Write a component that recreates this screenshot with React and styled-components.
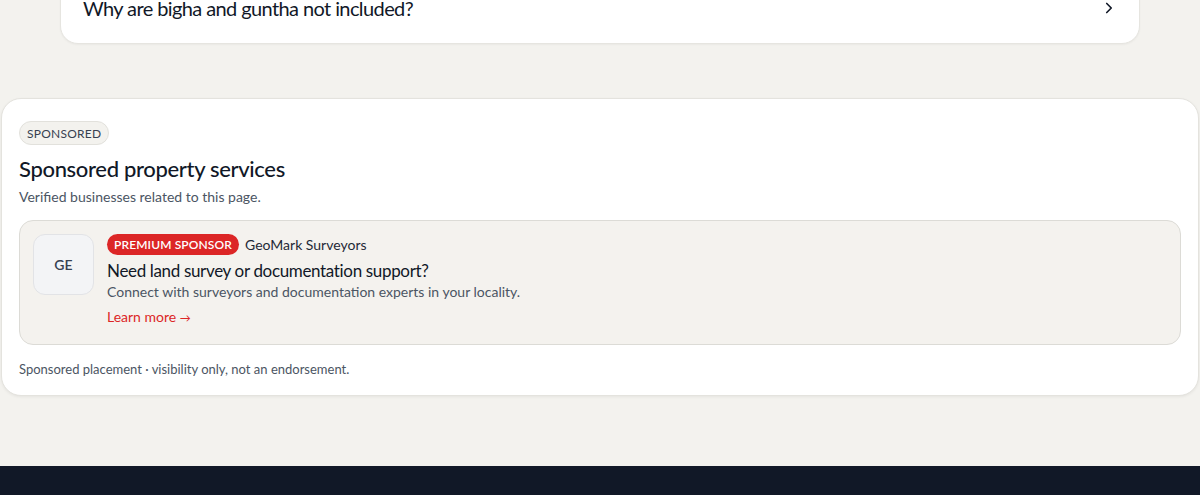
import React from 'react'
import styled, { createGlobalStyle } from 'styled-components'

const GlobalStyle = createGlobalStyle`
  html, body {
    margin: 0;
    padding: 0;
    background: #f3f2ee;
    font-family: Lato, "Noto Sans", sans-serif;
    color: #111827;
    -webkit-font-smoothing: antialiased;
  }
  * { box-sizing: border-box; }
`

const Page = styled.div`
  display: flex;
  flex-direction: column;
  min-height: 495px;
  overflow: hidden;
`

const FaqSection = styled.section`
  padding: 0 60px;
  margin-top: -26px;
`

const FaqCard = styled.div`
  background: #fff;
  border: 1px solid #e6e5e0;
  border-radius: 18px;
  padding: 19px 22px 21px;
  box-shadow: 0 1px 2px rgba(0, 0, 0, 0.04);
`

const FaqRow = styled.div`
  display: flex;
  align-items: center;
  justify-content: space-between;
`

const Question = styled.span`
  font-size: 20px;
  line-height: 28px;
  letter-spacing: -0.03em;
  color: #111827;
`

const Chevron = styled.svg`
  width: 18px;
  height: 18px;
  margin-right: -1px;
  color: #111827;
`

const SponsorCard = styled.section`
  margin: 54px 1px 0;
  background: #fff;
  border: 1px solid #e4e3de;
  border-radius: 20px;
  padding: 22px 17px 17px;
  box-shadow: 0 1px 3px rgba(0, 0, 0, 0.06);
`

const Tag = styled.span`
  display: inline-flex;
  align-items: center;
  height: 24px;
  padding: 0 7px;
  border-radius: 999px;
  background: #f3f2ee;
  border: 1px solid #e2e1dc;
  font-size: 12px;
  letter-spacing: 0.02em;
  color: #374151;
`

const Title = styled.h2`
  margin: 10px 0 0;
  font-size: 22px;
  line-height: 28px;
  font-weight: 500;
  letter-spacing: -0.015em;
  color: #111827;
`

const Subtitle = styled.p`
  margin: 4px 0 0;
  font-size: 14px;
  line-height: 20px;
  color: #4b5563;
`

const AdCard = styled.div`
  margin-top: 13px;
  display: flex;
  gap: 13px;
  padding: 13px 13px 16px;
  background: #f4f2ee;
  border: 1px solid #dcdbd6;
  border-radius: 14px;
`

const Logo = styled.div`
  flex: none;
  width: 61px;
  height: 61px;
  display: flex;
  align-items: center;
  justify-content: center;
  background: #f3f4f6;
  border: 1px solid #e2e3e6;
  border-radius: 12px;
  font-size: 14px;
  font-weight: 600;
  color: #374151;
`

const AdBody = styled.div`
  display: flex;
  flex-direction: column;
`

const AdMeta = styled.div`
  display: flex;
  align-items: center;
  gap: 6px;
  height: 21px;
`

const Premium = styled.span`
  display: inline-flex;
  align-items: center;
  height: 21px;
  padding: 0 7px;
  border-radius: 999px;
  background: #dc2626;
  color: #fff;
  font-size: 12px;
  font-weight: 600;
  letter-spacing: 0.01em;
`

const Company = styled.span`
  font-size: 14px;
  color: #1f2937;
`

const AdHeading = styled.h3`
  margin: 4px 0 0;
  font-size: 17px;
  line-height: 24px;
  font-weight: 400;
  letter-spacing: -0.02em;
  color: #111827;
`

const AdText = styled.p`
  margin: -1px 0 0;
  font-size: 14px;
  line-height: 20px;
  color: #4b5563;
`

const LearnMore = styled.a`
  margin-top: 5px;
  font-size: 14px;
  line-height: 20px;
  color: #dc2626;
  text-decoration: none;
  span { font-size: 11px; }
`

const Note = styled.p`
  margin: 15px 0 0;
  font-size: 13px;
  line-height: 18px;
  color: #4b5563;
`

const Footer = styled.footer`
  margin-top: 70px;
  flex: 1;
  background: #111827;
`

export default function App() {
  return (
    <Page>
      <GlobalStyle />
      <FaqSection>
        <FaqCard>
          <FaqRow>
            <Question>Why are bigha and guntha not included?</Question>
            <Chevron viewBox="0 0 24 24" fill="none" stroke="currentColor" strokeWidth="2.2" strokeLinecap="round" strokeLinejoin="round">
              <path d="M9 6l6 6-6 6" />
            </Chevron>
          </FaqRow>
        </FaqCard>
      </FaqSection>

      <SponsorCard>
        <Tag>SPONSORED</Tag>
        <Title>Sponsored property services</Title>
        <Subtitle>Verified businesses related to this page.</Subtitle>
        <AdCard>
          <Logo>GE</Logo>
          <AdBody>
            <AdMeta>
              <Premium>PREMIUM SPONSOR</Premium>
              <Company>GeoMark Surveyors</Company>
            </AdMeta>
            <AdHeading>Need land survey or documentation support?</AdHeading>
            <AdText>Connect with surveyors and documentation experts in your locality.</AdText>
            <LearnMore href="#">Learn more <span>→</span></LearnMore>
          </AdBody>
        </AdCard>
        <Note>Sponsored placement · visibility only, not an endorsement.</Note>
      </SponsorCard>

      <Footer />
    </Page>
  )
}
